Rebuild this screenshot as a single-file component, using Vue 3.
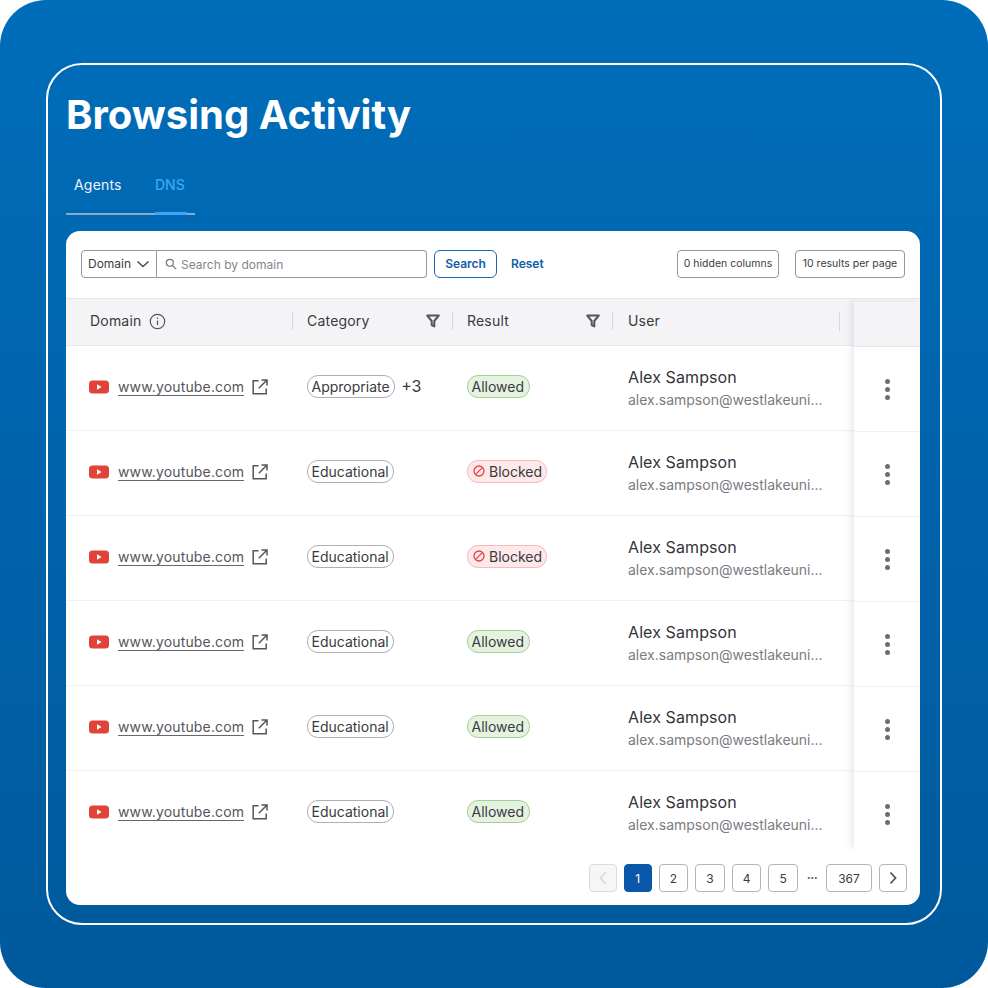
<template>
  <div class="page">
    <div class="frame">
      <h1 class="title">Browsing Activity</h1>

      <div class="tabs">
        <div class="tab">Agents</div>
        <div class="tab active">DNS</div>
      </div>

      <div class="card">
        <div class="toolbar">
          <div class="search-group">
            <div class="select">
              <span>Domain</span>
              <svg width="14" height="14" viewBox="0 0 14 14" fill="none" stroke="#4a4a50" stroke-width="1.5">
                <path d="M1.5 4.5 7 9.5l5.5-5" />
              </svg>
            </div>
            <div class="search-input">
              <svg width="12" height="12" viewBox="0 0 12 12" fill="none" stroke="#77777d" stroke-width="1.2">
                <circle cx="4.8" cy="4.8" r="3.5" />
                <path d="m7.5 7.5 3.7 3.7" />
              </svg>
              <span>Search by domain</span>
            </div>
          </div>
          <button class="btn-search">Search</button>
          <button class="btn-reset">Reset</button>
          <div class="spacer"></div>
          <button class="btn-small columns">0 hidden columns</button>
          <button class="btn-small results">10 results per page</button>
        </div>

        <div class="table">
          <div class="table-main">
            <div class="head">
              <div class="cell col-domain">
                Domain
                <svg class="info" width="17" height="17" viewBox="0 0 17 17" fill="none" stroke="#55555b" stroke-width="1.2">
                  <circle cx="8.5" cy="8.5" r="7.2" />
                  <path d="M8.5 7.5v4.6M8.5 4.6v1.3" />
                </svg>
              </div>
              <div class="cell col-category sep">
                Category
                <svg class="filter" width="14" height="14" viewBox="0 0 14 14" fill="none" stroke="#55555b" stroke-width="2">
                  <path d="M1.2 1.5h11.6L8.3 7v5.4L5.7 11V7z" stroke-linejoin="round" />
                </svg>
              </div>
              <div class="cell col-result sep">
                Result
                <svg class="filter" width="14" height="14" viewBox="0 0 14 14" fill="none" stroke="#55555b" stroke-width="2">
                  <path d="M1.2 1.5h11.6L8.3 7v5.4L5.7 11V7z" stroke-linejoin="round" />
                </svg>
              </div>
              <div class="cell col-user sep">User</div>
              <div class="head-end"></div>
            </div>

            <div v-for="(row, i) in rows" :key="i" class="row">
              <div class="cell col-domain">
                <svg class="yt" width="20" height="14" viewBox="0 0 20 14">
                  <rect x="0" y="0.5" width="20" height="13" rx="3.5" fill="#e0433a" />
                  <path d="M8 4.2v5.6L12.6 7z" fill="#fff" />
                </svg>
                <span class="link">www.youtube.com</span>
                <svg class="external" width="16" height="16" viewBox="0 0 16 16" fill="none" stroke="#55555b" stroke-width="1.5">
                  <path d="M6.5 1.8H1.2v13h13V9.5M9.5 1h5.5v5.5M15 1 6.8 9.2" />
                </svg>
              </div>
              <div class="cell col-category">
                <span class="pill">{{ row.category }}</span>
                <span v-if="row.more" class="more">{{ row.more }}</span>
              </div>
              <div class="cell col-result">
                <span class="pill" :class="row.result === 'Allowed' ? 'allowed' : 'blocked'">
                  <svg v-if="row.result === 'Blocked'" width="12" height="12" viewBox="0 0 12 12" fill="none" stroke="#e8424a" stroke-width="1.3">
                    <circle cx="6" cy="6" r="5" />
                    <path d="M2.6 9.4l6.8-6.8" />
                  </svg>
                  {{ row.result }}
                </span>
              </div>
              <div class="cell col-user">
                <div class="user-name">Alex Sampson</div>
                <div class="user-mail">alex.sampson@westlakeuni...</div>
              </div>
            </div>
          </div>

          <div class="table-actions">
            <div class="actions-head"></div>
            <div v-for="(row, i) in rows" :key="i" class="action-cell">
              <span class="dots"><i></i><i></i><i></i></span>
            </div>
          </div>
        </div>

        <div class="pagination">
          <button class="page-btn arrow disabled">
            <svg width="10" height="14" viewBox="0 0 10 14" fill="none" stroke="#d6d6da" stroke-width="1.6">
              <path d="M7.5 1.5 2.5 7l5 5.5" />
            </svg>
          </button>
          <button class="page-btn current">1</button>
          <button v-for="n in [2, 3, 4, 5]" :key="n" class="page-btn">{{ n }}</button>
          <span class="ellipsis">···</span>
          <button class="page-btn wide">367</button>
          <button class="page-btn arrow">
            <svg width="10" height="14" viewBox="0 0 10 14" fill="none" stroke="#55555b" stroke-width="1.8">
              <path d="M2.5 1.5 7.5 7l-5 5.5" />
            </svg>
          </button>
        </div>
      </div>
    </div>
  </div>
</template>

<script setup>
const rows = [
  { category: 'Appropriate', more: '+3', result: 'Allowed' },
  { category: 'Educational', result: 'Blocked' },
  { category: 'Educational', result: 'Blocked' },
  { category: 'Educational', result: 'Allowed' },
  { category: 'Educational', result: 'Allowed' },
  { category: 'Educational', result: 'Allowed' }
];
</script>

<style>
html,
body {
  margin: 0;
  background: #fff;
}
</style>

<style scoped>
.page {
  width: 988px;
  height: 988px;
  box-sizing: border-box;
  padding: 63px 46px;
  border-radius: 46px;
  background: linear-gradient(180deg, #006dba 0%, #00599c 100%);
  font-family: Inter, "Liberation Sans", sans-serif;
  color: #2f2f35;
}

.frame {
  height: 862px;
  box-sizing: border-box;
  border: 2px solid #fff;
  border-radius: 36px;
  padding: 0 20px 18px 18px;
  display: flex;
  flex-direction: column;
}

.title {
  margin: 26px 0 0;
  font-size: 40px;
  line-height: 48px;
  font-weight: 700;
  color: #fff;
}

/* tabs */
.tabs {
  display: flex;
  width: 129px;
  height: 48px;
  margin-top: 26px;
  border-bottom: 2px solid #8fa9c8;
}

.tab {
  width: 89px;
  padding-left: 8px;
  padding-top: 10px;
  box-sizing: border-box;
  font-size: 14px;
  line-height: 20px;
  letter-spacing: 0.2px;
  color: #eef4fb;
}

.tab.active {
  width: 32px;
  height: 50px;
  padding-left: 0;
  color: #3ca5f4;
  font-weight: 500;
  letter-spacing: 0;
  border-bottom: 3px solid #3ca5f4;
}

/* card */
.card {
  margin-top: 16px;
  flex: 1;
  background: #fff;
  border-radius: 14px;
  display: flex;
  flex-direction: column;
  overflow: hidden;
}

.toolbar {
  height: 67px;
  box-sizing: border-box;
  padding: 19px 15px 0;
  display: flex;
  align-items: flex-start;
}

.search-group {
  display: flex;
  height: 28px;
}

.select {
  width: 76px;
  box-sizing: border-box;
  border: 1px solid #96969c;
  border-radius: 4px 0 0 4px;
  display: flex;
  align-items: center;
  gap: 5px;
  padding: 0 0 1px 6px;
  font-size: 12px;
  color: #3c3c42;
}

.search-input {
  width: 270px;
  box-sizing: border-box;
  border: 1px solid #96969c;
  border-left: none;
  border-radius: 0 4px 4px 0;
  display: flex;
  align-items: center;
  gap: 4px;
  padding-left: 8px;
  font-size: 12px;
  color: #85858b;
}

button {
  font-family: inherit;
  background: #fff;
  padding: 0;
  cursor: pointer;
}

.btn-search {
  margin-left: 7px;
  width: 63px;
  height: 28px;
  padding-bottom: 2px;
  border: 1px solid #1667b0;
  border-radius: 6px;
  color: #0f5cab;
  font-size: 12px;
  font-weight: 600;
}

.btn-reset {
  margin-left: 14px;
  height: 28px;
  padding-bottom: 2px;
  border: none;
  color: #0f5cab;
  font-size: 12px;
  font-weight: 600;
}

.spacer {
  flex: 1;
}

.btn-small {
  height: 28px;
  margin-left: 16px;
  padding: 0 0 2px;
  border: 1px solid #96969c;
  border-radius: 4px;
  font-size: 10.5px;
  color: #3c3c42;
  white-space: nowrap;
}

.btn-small.columns {
  width: 102px;
}

.btn-small.results {
  width: 110px;
}

/* table */
.table {
  display: flex;
  height: 551px;
  overflow: hidden;
  background: #f4f3f6;
  border-top: 1px solid #e6e6ea;
  box-sizing: border-box;
}

.table-main {
  width: 788px;
  background: #fff;
}

.head {
  display: flex;
  height: 47px;
  background: #f4f3f6;
  border-bottom: 1px solid #e6e6ea;
  box-sizing: border-box;
  font-size: 14px;
  letter-spacing: 0.2px;
  color: #3a3a40;
}

.head .cell {
  position: relative;
  display: flex;
  align-items: center;
  padding-bottom: 4px;
}

.head .sep::before {
  content: "";
  position: absolute;
  left: 0;
  top: 13px;
  height: 18px;
  width: 1px;
  background: #d8d8dc;
}

.head-end {
  flex: 1;
  border-left: 1px solid #d8d8dc;
  margin: 13px 0 14px;
}

.row {
  display: flex;
  height: 85px;
  box-sizing: border-box;
  border-bottom: 1px solid #f1f1f3;
}

.row:last-child {
  border-bottom-color: transparent;
}

.row .cell {
  display: flex;
  align-items: center;
  padding-bottom: 2px;
}

.row .col-category,
.row .col-result {
  padding-bottom: 4px;
}

.col-domain {
  width: 226px;
  box-sizing: border-box;
  padding-left: 23px;
}

.head .col-domain {
  padding-left: 24px;
}

.col-category,
.col-result {
  width: 160px;
  box-sizing: border-box;
  padding-left: 15px;
}

.col-user {
  width: 227px;
  box-sizing: border-box;
  padding-left: 16px;
}

.info {
  margin: 2px 0 0 7px;
}

.filter {
  margin: 2px 12px 0 auto;
}

.yt {
  flex: none;
}

.link {
  margin-left: 9px;
  font-size: 14px;
  letter-spacing: 0.15px;
  color: #55555b;
  border-bottom: 1px solid #66666c;
  line-height: 17px;
}

.external {
  margin-left: 8px;
  flex: none;
}

.pill {
  display: inline-flex;
  align-items: center;
  gap: 4px;
  height: 23px;
  box-sizing: border-box;
  padding: 0 4.5px 0 3.5px;
  border: 1px solid #aeaeb4;
  border-radius: 11px;
  font-size: 14px;
  color: #3a3a40;
}

.pill.blocked {
  padding: 0 4px 0 5px;
}

.more {
  margin-left: 6px;
  font-size: 16px;
  color: #3a3a40;
}

.allowed {
  background: #e5f2e0;
  border-color: #a3d094;
}

.blocked {
  background: #fde8ea;
  border-color: #f8b8bd;
}

.row .col-user {
  display: block;
  padding-top: 20px;
}

.user-name {
  font-size: 16px;
  line-height: 22px;
  letter-spacing: 0.1px;
  color: #33333a;
}

.user-mail {
  margin-top: 3px;
  font-size: 14px;
  line-height: 18px;
  color: #7b7b82;
  white-space: nowrap;
}

.table-actions {
  flex: 1;
  margin-top: 3px;
  background: #fff;
  box-shadow: -3px 0 6px rgba(60, 50, 90, 0.1);
  z-index: 1;
}

.actions-head {
  height: 45px;
  background: #f4f3f6;
  border-bottom: 1px solid #e6e6ea;
  box-sizing: border-box;
}

.action-cell {
  height: 85px;
  box-sizing: border-box;
  border-bottom: 1px solid #f1f1f3;
  display: flex;
  align-items: center;
  justify-content: center;
}

.action-cell:last-child {
  border-bottom: none;
}

.dots {
  display: flex;
  flex-direction: column;
  gap: 3px;
}

.dots i {
  width: 5px;
  height: 5px;
  border-radius: 50%;
  background: #6c6c72;
}

/* pagination */
.pagination {
  display: flex;
  justify-content: flex-end;
  align-items: center;
  gap: 7px;
  padding: 15px 13px 0 0;
}

.page-btn {
  width: 29.6px;
  height: 28px;
  border: 1px solid #b4b4ba;
  border-radius: 4px;
  font-size: 12px;
  color: #3c3c42;
  display: flex;
  align-items: center;
  justify-content: center;
}

.page-btn.arrow {
  width: 28px;
}

.page-btn.disabled {
  background: #f6f6f7;
  border-color: #dcdce0;
}

.page-btn.current {
  width: 28px;
  background: #0a56a8;
  border-color: #0a56a8;
  color: #fff;
}

.page-btn.wide {
  width: 46px;
}

.ellipsis {
  width: 14px;
  font-size: 12px;
  font-weight: 700;
  line-height: 14px;
  letter-spacing: -0.5px;
  color: #66666c;
  text-align: center;
}
</style>
